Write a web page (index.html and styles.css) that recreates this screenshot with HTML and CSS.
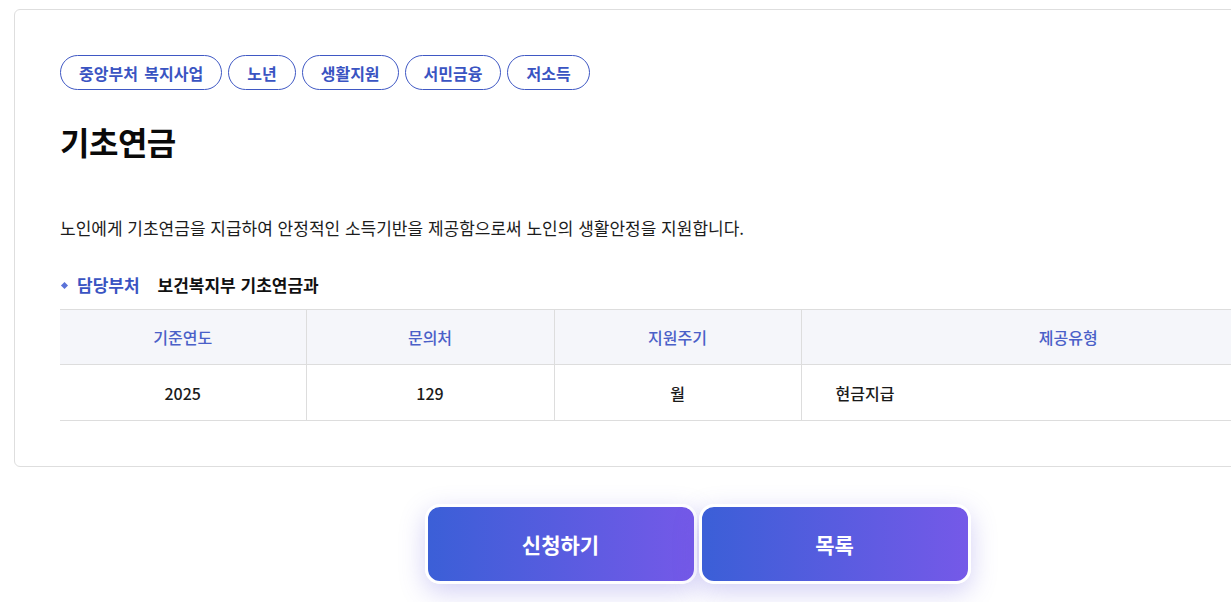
FILE: index.html
```html
<!DOCTYPE html>
<html lang="ko">
<head>
<meta charset="utf-8">
<title>기초연금</title>
<link rel="stylesheet" href="styles.css">
</head>
<body>
<div class="page">
  <section class="card">
    <ul class="tags">
      <li class="tag">중앙부처 복지사업</li>
      <li class="tag">노년</li>
      <li class="tag">생활지원</li>
      <li class="tag">서민금융</li>
      <li class="tag">저소득</li>
    </ul>
    <h1 class="title">기초연금</h1>
    <p class="desc">노인에게 기초연금을 지급하여 안정적인 소득기반을 제공함으로써 노인의 생활안정을 지원합니다.</p>
    <div class="dept">
      <span class="dept-label">담당부처</span>
      <span class="dept-value">보건복지부 기초연금과</span>
    </div>
    <table class="info">
      <colgroup>
        <col class="c1"><col class="c2"><col class="c3"><col class="c4">
      </colgroup>
      <thead>
        <tr><th>기준연도</th><th>문의처</th><th>지원주기</th><th>제공유형</th></tr>
      </thead>
      <tbody>
        <tr><td>2025</td><td>129</td><td>월</td><td class="last">현금지급</td></tr>
      </tbody>
    </table>
  </section>
  <div class="actions">
    <button class="btn">신청하기</button>
    <button class="btn">목록</button>
  </div>
</div>
</body>
</html>
```
FILE: styles.css
```css
html {
  overflow: hidden;
  background: #ffffff;
}
body {
  margin: 0;
  padding: 0;
  font-family: "Noto Sans CJK KR", "Noto Sans", sans-serif;
  color: #111;
}
.page {
  width: 1395px;
  padding: 9px 14px 19px;
  box-sizing: border-box;
}
.card {
  border: 1px solid #dedede;
  border-radius: 6px;
  padding: 45px 45px 45px;
  background: #fff;
}
.tags {
  list-style: none;
  margin: 0;
  padding: 0;
  display: flex;
  gap: 6px;
}
.tag {
  height: 35px;
  box-sizing: border-box;
  border: 1px solid #3f58c4;
  border-radius: 18px;
  padding: 0 18px;
  display: flex;
  align-items: center;
  font-size: 16px;
  font-weight: 700;
  color: #3a54c2;
  word-spacing: 2px;
}
.title {
  margin: 30px 0 0;
  font-size: 32px;
  line-height: 42px;
  font-weight: 700;
  color: #0a0a0a;
  letter-spacing: -0.5px;
}
.desc {
  margin: 54px 0 0;
  font-size: 17px;
  line-height: 24px;
  color: #1c1c1c;
}
.dept {
  margin-top: 33px;
  display: flex;
  align-items: center;
  font-size: 17px;
  line-height: 24px;
  font-weight: 700;
}
.dept-label {
  position: relative;
  padding-left: 17px;
  color: #3a54c2;
  margin-right: 18px;
}
.dept-label::before {
  content: "";
  position: absolute;
  left: 2px;
  top: 10px;
  width: 5px;
  height: 5px;
  background: #5a72d8;
  transform: rotate(45deg);
}
.dept-value {
  color: #111;
}
.info {
  margin-top: 12px;
  width: 1275px;
  border-collapse: collapse;
  table-layout: fixed;
}
.c1 { width: 246px; }
.c2 { width: 248px; }
.c3 { width: 247px; }
.info th, .info td {
  border-top: 1px solid #dddddd;
  border-bottom: 1px solid #dddddd;
  text-align: center;
  padding: 0;
}
.info th + th, .info td + td {
  border-left: 1px solid #dddddd;
}
.info th {
  height: 54px;
  background: #f5f6fa;
  font-size: 16px;
  font-weight: 500;
  color: #4a60c8;
}
.info td {
  height: 55px;
  font-size: 16px;
  font-weight: 500;
  color: #1a1a1a;
}
.info td.last {
  text-align: left;
  padding-left: 34px;
}
.actions {
  margin-top: 37px;
  display: flex;
  justify-content: center;
  gap: 2px;
}
.btn {
  width: 272px;
  height: 80px;
  box-sizing: border-box;
  border: 3px solid #ffffff;
  border-radius: 15px;
  background: linear-gradient(90deg, #3b5fd7 0%, #7559e8 100%);
  color: #ffffff;
  font-family: "Noto Sans CJK KR", "Noto Sans", sans-serif;
  font-size: 21px;
  font-weight: 700;
  box-shadow: 0 8px 26px rgba(96, 86, 220, 0.28);
  cursor: pointer;
}
```
